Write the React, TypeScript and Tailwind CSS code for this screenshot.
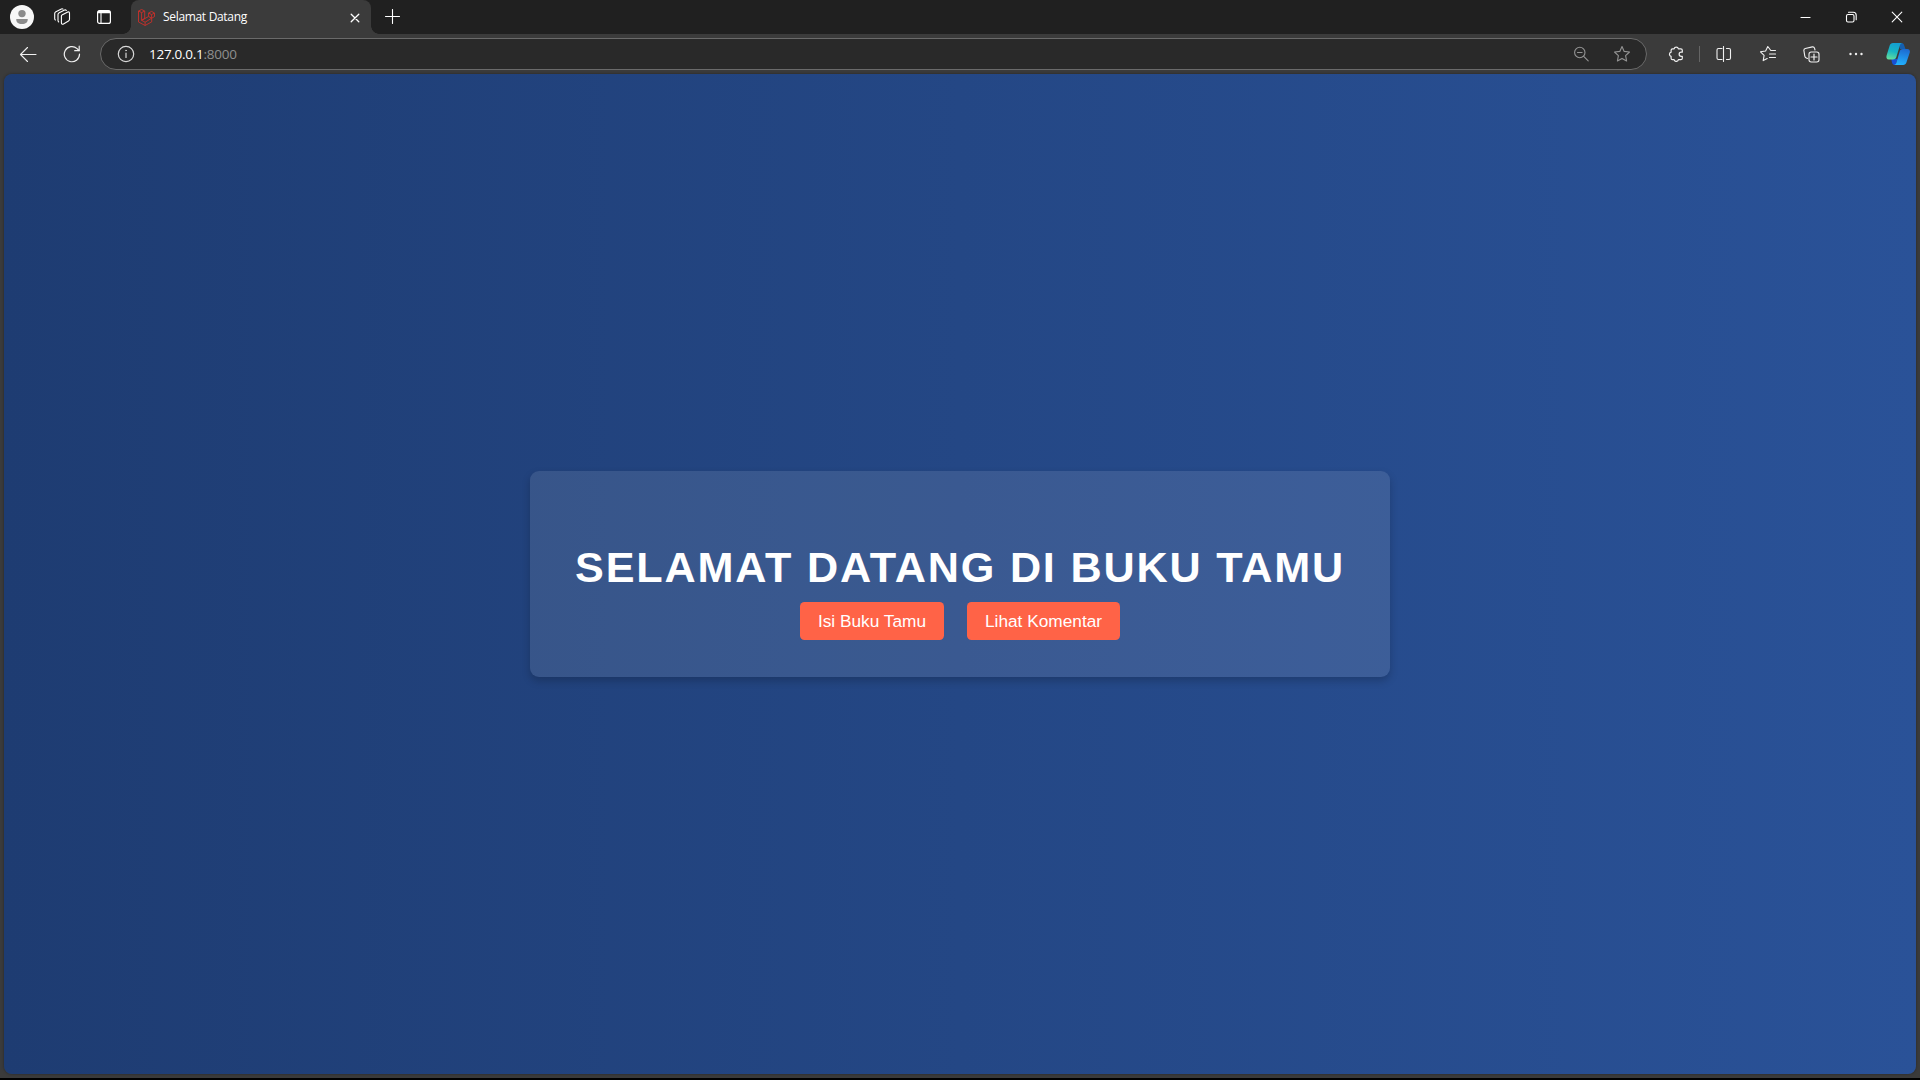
import type { ReactNode } from "react";

function Icon({ size = 16, className = "", children }: { size?: number; className?: string; children: ReactNode }) {
  return (
    <svg
      width={size}
      height={size}
      viewBox={`0 0 ${size} ${size}`}
      fill="none"
      stroke="currentColor"
      strokeWidth="1.1"
      strokeLinecap="round"
      strokeLinejoin="round"
      className={`shrink-0 ${className}`}
    >
      {children}
    </svg>
  );
}

function TabBar() {
  return (
    <div className="flex h-[34px] items-start bg-[#202020] text-white">
      <div className="flex h-[34px] w-[131px] shrink-0 items-center pl-[10px]">
        <svg width="24" height="24" viewBox="0 0 24 24" className="shrink-0">
          <circle cx="12" cy="12" r="12" fill="#f7f7f7" />
          <circle cx="12" cy="8.6" r="3.7" fill="#8b8b8b" />
          <path d="M6.3 14h11.4c.4 3-2 5-5.7 5s-6.1-2-5.7-5z" fill="#8b8b8b" />
        </svg>
        <Icon size={18} className="ml-[19px]">
          <path d="M8.900 7.100 14.800 4.100c1-.5 1.700 0 1.700 1.100v6c0 .8-.3 1.400-1 1.800l-5 2.900c-1.200.7-2.100.2-2.100-1.200V8c0-.4.200-.7.500-.9z" />
          <path d="M13.300 2.500c-.4-.6-1-.7-1.700-.4L6.200 4.800c-.8.400-1.200 1-1.200 1.800v5.900c0 .7.200 1.100.7 1.500" />
          <path d="M10 1.100C9.600.7 9 .7 8.400 1L2.900 3.700c-.8.400-1.200 1-1.200 1.800v5c0 .7.200 1.200.7 1.500" />
        </Icon>
        <Icon size={16} className="ml-[25px]">
          <rect x="1.6" y="1.6" width="12.8" height="12.8" rx="2" strokeWidth="1.2" />
          <path d="M2 3.5h12M2 2.600h12" strokeWidth="1.700" strokeLinecap="butt" />
          <path d="M5 4.500v9.500" />
        </Icon>
      </div>
      <div className="relative flex h-[34px] w-[240px] shrink-0 items-center rounded-t-[8px] bg-[#3b3b3b] pl-[7px] pr-[11px]">
        <div className="absolute bottom-0 -left-[8px] h-[8px] w-[8px] bg-[radial-gradient(circle_at_0_0,#202020_7.500px,#3b3b3b_8px)]" />
        <div className="absolute bottom-0 -right-[8px] h-[8px] w-[8px] bg-[radial-gradient(circle_at_100%_0,#202020_7.500px,#3b3b3b_8px)]" />
        <svg
          width="17"
          height="17"
          viewBox="0 0 17 17"
          fill="none"
          stroke="#c9302a"
          strokeWidth="0.9"
          strokeLinejoin="round"
          className="shrink-0"
        >
          <path d="M.5 2 3.600.5 6.700 2v7.600L3.600 11.300V3.600zM.5 2v11l6.600 3.500 6.600-3.600V9.200l2.800-1.600V4L13.600 2.400l-3 1.600v3.500L3.600 11.300" />
          <path d="M3.600 3.600 6.700 2M3.600 11.300l3.500 1.900v3.300M7.100 13.200l6.600-4M10.600 4l3 1.600L16.500 4M13.600 5.600v3.600L10.600 7.500" />
        </svg>
        <span className="ml-[8px] whitespace-nowrap font-['Open_Sans','Noto_Sans',sans-serif] text-[12px] leading-none tracking-[-0.320px]">
          Selamat Datang
        </span>
        <Icon size={10} className="ml-auto mt-px">
          <path d="m1.200 1.200 7.600 7.600M8.800 1.200 1.200 8.800" strokeWidth="1.300" />
        </Icon>
      </div>
      <Icon size={15} className="ml-[14px] mt-[9px]">
        <path d="M7.500.5v14M.5 7.500h14" />
      </Icon>
      <div className="ml-auto flex h-[34px] items-center pr-[17px]">
        <Icon size={12} className="mr-[34px]">
          <path d="M2 6.500h9" />
        </Icon>
        <Icon size={12} className="mr-[34px]">
          <rect x="1.500" y="3.500" width="7.500" height="7.500" rx="1.500" />
          <path d="M3.500 1.300h4.700c1.800 0 3 1.200 3 3v4.400" />
        </Icon>
        <Icon size={12}>
          <path d="m1.200 1.200 9.600 9.600M10.800 1.200l-9.600 9.600" />
        </Icon>
      </div>
    </div>
  );
}

function CopilotLogo() {
  return (
    <svg width="24" height="22" viewBox="0 0 24 22" className="shrink-0">
      <defs>
        <linearGradient id="leafLeft" x1="0.500" y1="0" x2="0.250" y2="1">
          <stop offset="0" stopColor="#149fd0" />
          <stop offset="0.500" stopColor="#18b5c4" />
          <stop offset="1" stopColor="#65df9b" />
        </linearGradient>
        <linearGradient id="leafRight" x1="0.600" y1="0" x2="0.400" y2="1">
          <stop offset="0" stopColor="#1d6ad0" />
          <stop offset="1" stopColor="#22b2ff" />
        </linearGradient>
      </defs>
      <path d="M13 0h2.500c1.600 0 2.300 1 2.800 2.800L19.500 6H14z" fill="#155faf" />
      <path d="M5.300 16h6l-1.300 6H8.300c-1.300 0-1.900-1-2.300-2.500z" fill="#174fd5" />
      <path d="M7 0h9c-1.400.3-1.800 1.500-2.300 3L10.500 13.500c-.7 2.300-1.500 3-3.500 3H2.800C.7 16.500 0 14.800.6 12.500L3.700 2.500C4.200.9 5.200 0 7 0z" fill="url(#leafLeft)" />
      <path d="M17 6h4.300c2.200 0 3 1.500 2.400 3.700l-3.300 9.800c-.5 1.600-1.500 2.500-3.300 2.500H8.200c1.500-.3 2-1.500 2.400-3L13.500 9c.6-2.200 1.500-3 3.500-3z" fill="url(#leafRight)" />
    </svg>
  );
}

function Toolbar() {
  return (
    <div className="flex h-[40px] items-center bg-[#3b3b3b] pl-[19px] pr-[10px] text-[#f0f0f0]">
      <Icon size={18}>
        <path d="M1.500 9.500H17M8.500 2.500l-7 7 7 7" />
      </Icon>
      <Icon size={18} className="ml-[26px]">
        <path d="M16.500 9.200a7.600 7.600 0 1 1-2.400-5.600L16 5.500" strokeWidth="1.200" />
        <path d="M16.200 1.200v4.500h-4.500" strokeWidth="1.200" />
      </Icon>
      <div className="ml-[19px] flex h-[32px] w-[1547px] shrink-0 items-center rounded-full border border-[#6a6a6a] bg-[#292929] pl-[16px] pr-[15px]">
        <Icon size={18} className="text-[#d8d8d8]">
          <circle cx="9" cy="9" r="7.700" strokeWidth="1.200" />
          <path d="M9 8v4.500" strokeWidth="1.200" />
          <circle cx="9" cy="5.500" r=".5" fill="currentColor" strokeWidth=".5" />
        </Icon>
        <span className="ml-[14px] mt-px whitespace-nowrap font-['Open_Sans','Noto_Sans',sans-serif] text-[13.500px] leading-none tracking-[-0.270px] text-white">
          127.0.0.1<span className="text-[#8f8f8f]">:8000</span>
        </span>
        <Icon size={16} className="ml-auto text-[#949494]">
          <circle cx="6.800" cy="6.500" r="5.200" />
          <path d="m10.700 10.300 4.500 4.500M4.500 6.500h4.600" />
        </Icon>
        <Icon size={18} className="ml-[24px] text-[#949494]">
          <path d="m9 1.500 2.200 4.900 5.300.6-3.900 3.600 1 5.400L9 13.400 4.400 16l1-5.400L1.500 7l5.300-.6z" />
        </Icon>
      </div>
      <Icon size={16} className="ml-[21px]">
        <path
          d="M4.600 2.800h1.500a2.200 2.200 0 0 1 4.300 0h2.400c1 0 1.500.5 1.500 1.400v2h-1.100a2.050 2.050 0 0 0 0 4.100h1.100v1.900c0 1-.5 1.500-1.500 1.500h-2.400a2.200 2.200 0 0 1-4.300 0H4.600c-1 0-1.500-.5-1.500-1.500v-1.900a2.100 2.100 0 0 1 0-4.100v-2c0-.9.500-1.400 1.500-1.400z"
          strokeWidth="1.200"
        />
      </Icon>
      <div className="ml-[15px] h-[16px] w-px bg-[#656565]" />
      <Icon size={16} className="ml-[16px]">
        <path d="M6 2.500H2.500c-.9 0-1.500.5-1.500 1.500v8c0 1 .6 1.500 1.500 1.500H6M10.500 2.500h2.500c.9 0 1.500.5 1.500 1.500v8c0 1-.6 1.500-1.500 1.500h-2.500M7.500.5v15" />
      </Icon>
      <Icon size={18} className="ml-[27px]">
        <path d="M15.500 5.500h-3.700L8.800 1.500 6.600 6 1.500 6.800l3.600 3.500-.9 5.300 4-2M10.500 9h6M10.500 12.500h6M12 5.500h4.500" />
      </Icon>
      <Icon size={17} className="ml-[26px]">
        <rect x="6" y="6" width="10" height="10" rx="2.200" />
        <path d="M8 11h6M11 8v6" strokeWidth="1.200" />
        <path d="M4.500 12.500 3.300 12c-1-.4-1.300-1-1.500-1.900L.9 4.700C.7 3.500 1.200 2.800 2.300 2.500l7-1.600c1.100-.2 1.900.2 2.200 1.200l.5 1.900" />
      </Icon>
      <Icon size={16} className="ml-[28px]">
        <g fill="currentColor" stroke="none">
          <circle cx="2.500" cy="8" r="1.200" />
          <circle cx="8" cy="8" r="1.200" />
          <circle cx="13.500" cy="8" r="1.200" />
        </g>
      </Icon>
      <div className="ml-auto">
        <CopilotLogo />
      </div>
    </div>
  );
}

function LinkButton({ className, children }: { className: string; children: ReactNode }) {
  return (
    <a
      className={`flex h-[38px] items-center justify-center whitespace-nowrap rounded-[4.500px] bg-[#ff6347] pt-[2px] text-[17.280px] leading-none text-white ${className}`}
    >
      {children}
    </a>
  );
}

export default function App() {
  return (
    <div className="flex h-[1080px] w-[1920px] flex-col overflow-hidden border-b-2 border-black bg-[#3b3b3b]">
      <TabBar />
      <Toolbar />
      <main className="mx-[4px] flex h-[1000px] items-center justify-center rounded-[8px] bg-[linear-gradient(to_right,#1e3c72,#2a5298)] shadow-[0_0_3px_rgba(0,0,0,0.35)]">
        <section className="flex h-[206px] w-[860px] flex-col items-center rounded-[9px] bg-white/10 pt-[71px] font-['Liberation_Sans',Arial,sans-serif] shadow-[0_4px_8px_rgba(0,0,0,0.2)]">
          <h1 className="h-[50px] whitespace-nowrap text-[43.200px] font-bold leading-[50px] tracking-[1.800px] text-white">
            SELAMAT DATANG DI BUKU TAMU
          </h1>
          <div className="mt-[10px] flex gap-[23px]">
            <LinkButton className="w-[144px]">Isi Buku Tamu</LinkButton>
            <LinkButton className="w-[153px]">Lihat Komentar</LinkButton>
          </div>
        </section>
      </main>
    </div>
  );
}
